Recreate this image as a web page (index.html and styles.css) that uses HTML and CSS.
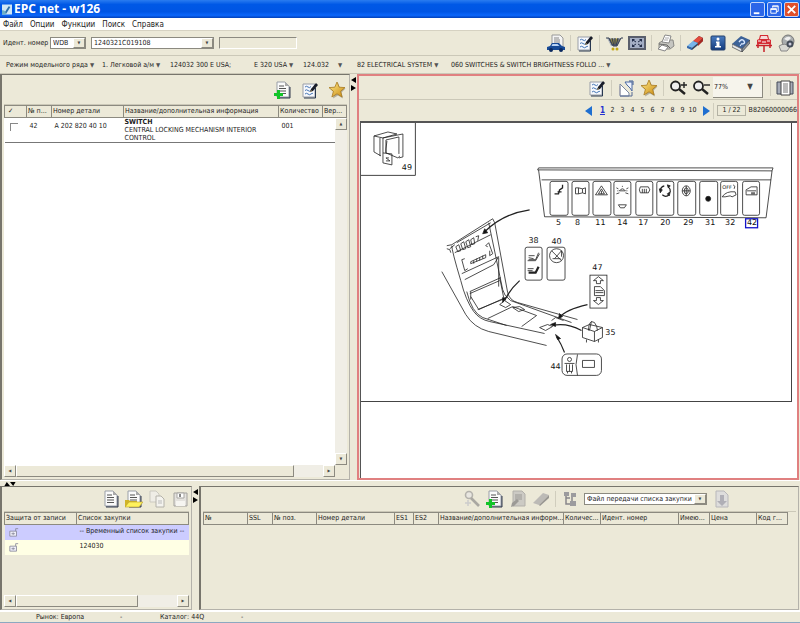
FILE: index.html
```html
<!DOCTYPE html>
<html lang="ru">
<head>
<meta charset="utf-8">
<title>EPC net - w126</title>
<link rel="stylesheet" href="styles.css">
</head>
<body>
<svg class="defs" aria-hidden="true">
  <defs>
    <linearGradient id="gold" x1="0" y1="0" x2="1" y2="1"><stop offset="0" stop-color="#ffe98a"/><stop offset="1" stop-color="#c98a10"/></linearGradient>
    <linearGradient id="navy" x1="0" y1="0" x2="0" y2="1"><stop offset="0" stop-color="#4a7cc0"/><stop offset="1" stop-color="#123a7c"/></linearGradient>
  </defs>
  <symbol id="doc" viewBox="0 0 18 18">
    <path d="M4 2h8l4 4v11H4z" fill="#8a8f9c"/><path d="M3 1h8l4 4v11H3z" fill="#fafafa" stroke="#9a9fa8"/>
    <path d="M11 1l4 4h-4z" fill="#aaa"/><path d="M5 5h5M5 7.500h7M5 10h7M5 12.500h7" stroke="#555" fill="none"/><path d="M16 6v11H4" stroke="#333b4c" fill="none"/>
  </symbol>
  <symbol id="docplus" viewBox="0 0 18 18">
    <use href="#doc"/><path d="M0 12h3V9h3v3h3v3H6v3H3v-3H0z" fill="#12c428"/>
  </symbol>
  <symbol id="note" viewBox="0 0 18 18">
    <path d="M2 3h12v13H2z" fill="#f6f8fc" stroke="#9a9ea8"/><path d="M14.500 7v10H3" stroke="#283850" fill="none"/>
    <path d="M4 6q1.500-1.500 3 0t3-.500M4 9.500q1.500-1.500 3 0t3 0M4 13q1.500-1.500 3 0t3 0 2 0" fill="none" stroke="#4474b4"/>
    <path d="M9 11l1-3 5-6 2 2-5 6z" fill="#181c28"/><path d="M9 11l1-2 1 1z" fill="#c8a860"/>
  </symbol>
  <symbol id="star" viewBox="0 0 18 18">
    <path d="M10 2l2 5 5.500.500-4 4 1.500 6-5-3-5 3 1-6-4-4L8 7z" fill="#8c8672" opacity=".6"/>
    <path d="M9 1l2.200 5.200 5.800.400-4.400 3.700 1.500 5.700L9 12.800 3.900 16l1.500-5.700L1 6.600l5.800-.400z" fill="url(#gold)" stroke="#a87a20" stroke-width=".8"/>
  </symbol>
  <symbol id="cardoc" viewBox="0 0 18 18">
    <path d="M5 1h8l3 3v9H5z" fill="#f4f4f4" stroke="#999"/><path d="M7 4h5M7 6h6M7 8h6" stroke="#888"/>
    <path d="M0 16v-3l3-1 2-3h7l3 3 3 1v3z" fill="#174a96"/><path d="M5.500 10h5l2 2h-8z" fill="#b8d2f4"/>
    <circle cx="4" cy="16" r="2" fill="#0c2a60"/><circle cx="14" cy="16" r="2" fill="#0c2a60"/>
  </symbol>
  <symbol id="cart" viewBox="0 0 18 18">
    <path d="M2 4h14l-4 8H6z" fill="#a4adb8"/><path d="M5 6l2-2 2 2 2-2 3 2-3 4H7z" fill="#ecd048"/>
    <path d="M1 4h3l4 8h4l4-8h2M4 6h11M5 8h9M6 10h7M7 4l2 8M10 4v8M13 4l-2 8" fill="none" stroke="#333c50"/>
    <circle cx="8" cy="15" r="1.500" fill="#c4a818"/><circle cx="12" cy="15" r="1.500" fill="#c4a818"/>
  </symbol>
  <symbol id="full" viewBox="0 0 18 18">
    <path d="M0 2h18v14H0z" fill="#5a5f6c"/><path d="M2 4h14v10H2z" fill="#a4aec4"/>
    <path d="M4 5h3L4 8zM14 5h-3l3 3zM4 13h3l-3-3zM14 13h-3l3-3z" fill="#222c48"/><path d="M5 6l3 2M13 6l-3 2M5 12l3-2M13 12l-3-2" stroke="#222c48"/>
  </symbol>
  <symbol id="printer" viewBox="0 0 18 18">
    <path d="M2 9l5-3h9l1 6-4 3H2z" fill="#c6c6c1" stroke="#8a8a86"/><path d="M5 8l3-7 6 1-2 7z" fill="#fff" stroke="#888"/>
    <path d="M2 10l8 1 3 3" fill="none" stroke="#666"/><path d="M1 15l4-4 6 2-3 4z" fill="#fff" stroke="#888"/><path d="M8 4h4M7 6h4" stroke="#aaa"/>
  </symbol>
  <symbol id="eraser" viewBox="0 0 18 18">
    <path d="M1 13L13 2l4 2v3L6 16z" fill="#36435c"/><path d="M7 7l6-5 4 2-5 5z" fill="#e24a3c"/><path d="M1 12l6-5 5 2-6 5z" fill="#78b4ea"/>
    <path d="M12 9l5-5v3l-5 5z" fill="#a82820"/><path d="M1 12l5 2v2l-5-2z" fill="#3468ac"/>
  </symbol>
  <symbol id="info" viewBox="0 0 18 18">
    <rect x="2" y="2" width="14" height="14" rx="1" fill="url(#navy)" stroke="#24406c"/><circle cx="9" cy="5" r="1.500" fill="#fff"/><path d="M7 7.500h3.500V12H12v1.500H6V12h1.500V9H7z" fill="#fff"/>
  </symbol>
  <symbol id="book" viewBox="0 0 18 18">
    <path d="M0 10l9-8 9 4-8 9z" fill="#3c6298"/><path d="M0 10l10 5v3L0 13z" fill="#e4e8ee" stroke="#555" stroke-width=".8"/><path d="M10 15l8-9v3l-8 9z" fill="#89939f" stroke="#333" stroke-width=".6"/>
    <path d="M7 8q3-4 5-1t-3 3M8 11l1 .500" stroke="#d8e8ff" fill="none" stroke-width="1.400"/>
  </symbol>
  <symbol id="carred" viewBox="0 0 18 18">
    <path d="M2 10V6l2-1 1-4h8l1 4 2 1v4z" fill="#d42c34"/><path d="M6 2h6l1 3H5z" fill="#f6dada"/><path d="M3 7h3M12 7h3M7 8h4" stroke="#fff"/>
    <path d="M1 11.500h16M9 12v6M3 10v4M15 10v4" stroke="#c82028" stroke-width="1.500"/>
  </symbol>
  <symbol id="globe" viewBox="0 0 18 18">
    <circle cx="10" cy="7" r="6" fill="#a9adae" stroke="#777"/><path d="M6 5q4-4 7-1l-3 3z" fill="#eee"/><path d="M1 12q6-4 11 1l-3 4H3z" fill="#d8d8d2" stroke="#888"/>
    <circle cx="12" cy="10" r="3.500" fill="#444c58"/><circle cx="12" cy="10" r="1.500" fill="#ccd"/>
  </symbol>
  <symbol id="expand" viewBox="0 0 18 18">
    <path d="M3 5l9 9v3H3z" fill="#fff" stroke="#7a86a0"/><path d="M8 3h7v9l-2-3-3-3z" fill="#eef2fc" stroke="#4a68a0"/><path d="M3 17h12v-4" fill="none" stroke="#566a94"/>
    <path d="M3 7v9" stroke="#99a"/><path d="M12 2h4v4" stroke="#3c5a94" fill="none"/>
  </symbol>
  <symbol id="zoomin" viewBox="0 0 18 18">
    <circle cx="6.500" cy="7" r="4.500" fill="#eee" stroke="#222" stroke-width="1.800"/><path d="M10 10l6 5" stroke="#222" stroke-width="2.400"/><path d="M15 3v6M12 6h6" stroke="#222" stroke-width="1.400"/>
  </symbol>
  <symbol id="zoomout" viewBox="0 0 18 18">
    <circle cx="6.500" cy="7" r="4.500" fill="#eee" stroke="#222" stroke-width="1.800"/><path d="M10 10l6 5" stroke="#222" stroke-width="2.400"/><path d="M12 6h6" stroke="#222" stroke-width="1.400"/>
  </symbol>
  <symbol id="pages" viewBox="0 0 18 18">
    <path d="M1 3h16v12H1z" fill="#a8adb8" stroke="#444a58"/><path d="M5 2h9v14H5z" fill="#fff" stroke="#444"/><path d="M7 5h5M7 7h5M7 9h5M7 11h5M7 13h5" stroke="#777"/>
  </symbol>
  <symbol id="folder" viewBox="0 0 18 18">
    <use href="#doc"/><path d="M0 17V10h4l1 1h7v6z" fill="#d0b428"/><path d="M0 17l4-5h14l-4 5z" fill="#fff25c" stroke="#b8a030" stroke-width=".6"/>
  </symbol>
  <symbol id="copy" viewBox="0 0 18 18">
    <path d="M2 1h6l3 3v8H2z" fill="#efede6" stroke="#cbc9c0"/><path d="M8 6h5l3 3v8H8z" fill="#f4f3ee" stroke="#b4b2aa"/><path d="M10 11h4M10 13h4" stroke="#bbb"/>
  </symbol>
  <symbol id="floppy" viewBox="0 0 18 18">
    <path d="M3 3h13v13H3z" fill="#e4e2de" stroke="#a4a29e"/><path d="M6 3h7v5H6z" fill="#fff" stroke="#a8a6a2"/><path d="M9 4v3" stroke="#888" stroke-width="2"/><path d="M5 11h9v5H5z" fill="#f6f5f1"/>
  </symbol>
  <symbol id="key" viewBox="0 0 18 18">
    <circle cx="6" cy="5" r="3.500" fill="#e8e6e0" stroke="#b4b2ac" stroke-width="1.600"/><path d="M8 8l8 8" stroke="#aaa8a2" stroke-width="2.600"/><path d="M2 13h6M5 10v6" stroke="#ccc" stroke-width="1.500"/>
  </symbol>
  <symbol id="docedit" viewBox="0 0 18 18">
    <path d="M4 1h9l3 3v12H4z" fill="#cccac4" stroke="#b2b0aa"/><path d="M6 5h7M6 7h7M6 9h7" stroke="#9a9894"/><path d="M2 17l1-4 5-4 2 2-5 5z" fill="#9c9a96"/>
  </symbol>
  <symbol id="erasergrey" viewBox="0 0 18 18">
    <path d="M1 13L11 3l6 2-10 10z" fill="#bcbab6"/><path d="M7 15L17 5v3L8 16z" fill="#989692"/>
  </symbol>
  <symbol id="tree" viewBox="0 0 18 18">
    <path d="M5 3v11h4M5 8h4M11 6v5" stroke="#88868a" stroke-width="1.500" fill="none"/><path d="M3 2h5v4H3zM10 3h5v4h-5zM9 11h6v5H9z" fill="#9c9b9e"/>
  </symbol>
  <symbol id="docdown" viewBox="0 0 18 18">
    <path d="M4 1h8l4 4v12H4z" fill="#dedddc" stroke="#b8b7ba"/><path d="M8 5h4v6h3l-5 5-5-5h3z" fill="#b0afb6"/>
  </symbol>
  <symbol id="lock" viewBox="0 0 12 12">
    <path d="M1 5h8v6H1z" fill="#eeeef8" stroke="#88889a"/><path d="M3 8h4M5 6.500v3" stroke="#88889a"/><path d="M8 5V2h3" fill="none" stroke="#88889a"/>
  </symbol>
</svg>

<header class="titlebar">
  <svg class="app-icon" viewBox="0 0 12 12"><path d="M0 0h12v12H0z" fill="#cfe6f4"/><path d="M3 10l5-8 2 1-5 8z" fill="#2b6ea8"/><path d="M0 7q4-1 5 5H0z" fill="#6cb0c8"/></svg>
  <h1>EPC net - w126</h1>
  <div class="winbtns">
    <button aria-label="Свернуть"><svg viewBox="0 0 14 14"><path d="M3 10h6v2H3z" fill="#fff"/></svg></button>
    <button aria-label="Восстановить"><svg viewBox="0 0 14 14"><path d="M5 5V3h6v6H9M5 4h6M3 6h6v5H3zM3 7h6" stroke="#fff" fill="none"/></svg></button>
    <button class="close" aria-label="Закрыть"><svg viewBox="0 0 14 14"><path d="M3 3l8 8M11 3l-8 8" stroke="#fff" stroke-width="2"/></svg></button>
  </div>
</header>

<nav class="menu"><button>Файл</button><button>Опции</button><button>Функции</button><button>Поиск</button><button>Справка</button></nav>

<div class="toolbar ident">
  <label for="wmi">Идент. номер</label>
  <span class="combo wmi"><select id="wmi"><option>WDB</option></select></span>
  <span class="combo vin"><select aria-label="Номер"><option>1240321C019108</option></select></span>
  <input class="extra" aria-label="Дополнение" disabled>
  <div class="icons">
    <button aria-label="Карта автомобиля"><svg><use href="#cardoc"/></svg></button><i></i>
    <button aria-label="Заметки"><svg><use href="#note"/></svg></button><i></i>
    <button aria-label="Корзина"><svg><use href="#cart"/></svg></button>
    <button aria-label="Полный экран"><svg><use href="#full"/></svg></button><i></i>
    <button aria-label="Печать"><svg><use href="#printer"/></svg></button><i></i>
    <button aria-label="Очистить"><svg><use href="#eraser"/></svg></button>
    <button aria-label="Информация"><svg><use href="#info"/></svg></button>
    <button aria-label="Справочник"><svg><use href="#book"/></svg></button>
    <button aria-label="Автомобиль"><svg><use href="#carred"/></svg></button>
    <button aria-label="Сеть"><svg><use href="#globe"/></svg></button>
  </div>
</div>

<nav class="crumbs">
  <button class="drop">Режим модельного ряда</button>
  <button class="drop">1. Легковой а/м</button>
  <span>124032 300 E USA;</span>
  <button class="drop">E 320 USA</button>
  <button class="drop spread">124.032</button>
  <button class="drop">82 ELECTRICAL SYSTEM</button>
  <button class="drop">060 SWITCHES &amp; SWITCH BRIGHTNESS FOLLO ...</button>
</nav>

<main class="upper">
  <section class="pane parts">
    <div class="toolbar wide">
      <div class="icons">
        <button aria-label="Добавить"><svg><use href="#docplus"/></svg></button>
        <button aria-label="Заметки"><svg><use href="#note"/></svg></button>
        <button aria-label="Избранное"><svg><use href="#star"/></svg></button>
      </div>
    </div>
    <div class="listing">
      <table>
        <colgroup><col class="w22"><col class="w25"><col class="w72"><col><col class="w44"><col class="w24"></colgroup>
        <thead><tr><th class="tick">✓</th><th>№ п...</th><th>Номер детали</th><th>Название/дополнительная информация</th><th>Количество</th><th>Вер...</th></tr></thead>
        <tbody><tr><td><input type="checkbox" aria-label="Выбрать 42"></td><td>42</td><td>A 202 820 40 10</td><td class="name"><b>SWITCH</b><br>CENTRAL LOCKING MECHANISM INTERIOR CONTROL</td><td>001</td><td></td></tr></tbody>
      </table>
      <div class="vscroll"><button class="up" aria-label="Вверх"></button><button class="down" aria-label="Вниз"></button></div>
    </div>
    <div class="hscroll"><button class="left" aria-label="Влево"></button><span class="thumb"></span><button class="right" aria-label="Вправо"></button></div>
  </section>
  <div class="vsplit"><svg viewBox="0 0 5 14"><path d="M5 0v6L0 3zM0 8v6l5-3z"/></svg></div>
  <section class="viewer">
    <div class="toolbar view">
      <div class="icons">
        <button aria-label="Заметки"><svg><use href="#note"/></svg></button><i></i>
        <button aria-label="Вписать"><svg><use href="#expand"/></svg></button>
        <button aria-label="Избранное"><svg><use href="#star"/></svg></button><i></i>
        <button aria-label="Увеличить"><svg><use href="#zoomin"/></svg></button>
        <button aria-label="Уменьшить"><svg><use href="#zoomout"/></svg></button>
        <span class="scale"><select aria-label="Масштаб"><option>77%</option></select></span><i></i>
        <button aria-label="Страницы"><svg><use href="#pages"/></svg></button>
      </div>
    </div>
    <nav class="pager">
      <button aria-label="Назад"><svg viewBox="0 0 8 10"><path d="M7 0v10L0 5z" fill="#1f6fd0"/></svg></button>
      <div class="nums"><a href="#" class="on">1</a><a href="#">2</a><a href="#">3</a><a href="#">4</a><a href="#">5</a><a href="#">6</a><a href="#">7</a><a href="#">8</a><a href="#">9</a><a href="#">10</a></div>
      <button aria-label="Вперёд"><svg viewBox="0 0 8 10"><path d="M1 0v10l7-5z" fill="#1f6fd0"/></svg></button>
      <i></i><span class="count">1 / 22</span><span class="code">B82060000066</span>
    </nav>
    <div class="sheet">
      <svg class="drawing" viewBox="361 124 431 279" role="img" aria-label="Схема выключателей">
        <g fill="none" stroke="#222" stroke-width=".8">
          <path d="M415.500 124v52.500H361" stroke="#444" stroke-width="1"/>
          <path d="M374 137l14-4 9 2-14 4zM374 137v16l7 4M383 139v25l9 2v-11M383 139l20-4v23l-4 1M386 141v13l12 5 2-2M386 141l13-3v17M386 154v-4l1-8M383 154l9 1M389 159h-3l4 3h-4M380 139v18"/>
          <path d="M539 169h235l-1 3-235-1zM539 171l6 47 222 1 6-47M542 181h230"/>
          <rect x="550.500" y="182.500" width="18" height="34" rx="2"/><rect x="572.500" y="182.500" width="17" height="34" rx="2"/><rect x="593.500" y="182.500" width="18" height="34" rx="2"/><rect x="614.500" y="182.500" width="17" height="34" rx="2"/><rect x="636.500" y="182.500" width="17" height="34" rx="2"/><rect x="657.500" y="182.500" width="17" height="34" rx="2"/><rect x="678.500" y="182.500" width="18" height="34" rx="2"/><rect x="700.500" y="182.500" width="18" height="34" rx="2"/><rect x="721.500" y="182.500" width="17" height="34" rx="2"/><rect x="743.500" y="182.500" width="17" height="34" rx="2"/>
          <path d="M555 195h4l1-4 3-2v-3M558 193h4" stroke-width="1.300"/>
          <path d="M576 189h3l4 1 3-1v6l-3-1-4 1h-3zM579 189v6M583 190v4"/>
          <path d="M602 187l6 9h-12zM602 190l3 5h-6zM602 192v3"/>
          <path d="M620 192q3-4 6 0zM617 189l2 1M629 189l-2 1M623 188v-1M617 195l3-1M629 195l-3-1M618 192h1M627 192h1M619 206h8l-2 3h-4z"/>
          <path d="M641 188h8q3 3 0 6h-8q-2-3 0-6zM643 190v4M645 190v4M647 190v4"/>
          <path d="M661 191a5.500 5.500 0 0 1 4-4M669 188a5.500 5.500 0 0 1 2 5M670 196a5.500 5.500 0 0 1-7 0" stroke-width="1.200"/><path d="M660 190l3 1-2 3zM668 186l3 1-2 2zM671 193l-1 4-2-2z" fill="#222"/>
          <ellipse cx="687" cy="192" rx="4" ry="5"/><ellipse cx="687" cy="192" rx="2" ry="3"/><path d="M683 192h8M687 187v10"/>
          <circle cx="709" cy="200" r="2.500" fill="#111"/>
          <path d="M723 198q4-6 13-5l1 3-4 2-2-1-5 1zM734 186q3 1 1 4"/>
          <path d="M747 195v-4l5-3h6v8h-11zM748 192h9M752 194h4M752 195h4"/>
          <path d="M530 211q-27 4-45 22" stroke-width="1.200"/><path d="M483 235l2-5 3 4z" fill="#111"/>
          <path d="M447 247l5-1 41-26M452 247q0 5 9 35 5 20 13 31 6 8 16 10l55 12M493 220l2 4 13 70q2 8 10 10l60 17M489 224l14 67q1 6 8 11l61 22M450 250l5-4M455 254l36-18M457 244l34-20M447 250q4 0 4 4"/>
          <path d="M456 248l3-2 2 6-3 1zM461 245l3-2 2 7-3 1zM466 243l3-2 2 7-3 1zM471 241l3-2 1 6-3 1zM476 238l3-1-1 5"/>
          <path d="M468 270l-3 2-3-11 3-1M488 248l-2-1 3-3 4 11-3 2v-5M471 263l15-7v3l-15 6zM474 262v3M477 260v3M480 259v3M483 257v3"/>
          <path d="M462 275l37-17M465 281l29-15 5-8M470 293l31-14M470 295l30-13M471 298l8 13 29-13M499 259v29M478 311l27-11M471 293v8M500 279l4 20"/>
          <path d="M488 320l25-12 24 9-15 11M500 306l5-4 6 4-5 3zM513 309l7-1 5 3-6 2zM540 329l8-3 5 2-7 4zM552 322l4-3 8 3"/>
          <path d="M442 273l24 43q8 13 23 17l58 14M467 293q5 21 16 26l24 8"/>
          <path d="M520 282q-10 9-15 20M588 306q-22 5-28 13M582 332q-15-8-29-5M565 354q-3-8-8-16" stroke-width="1.200"/><path d="M503 304v-5l3 1zM559 320l1-5 3 3zM551 326l5-2v4zM556 336l5 4-3 1z" fill="#111"/>
          <rect x="525.500" y="248.500" width="17" height="33" rx="2"/><rect x="547.500" y="248.500" width="18" height="33" rx="2"/>
          <path d="M529 261h7l3-7M529 257h6M529 259l5 1M528 262h8l4-7"/><path d="M529 274h7l3-6" stroke-width="2.200"/><path d="M528 270h6M528 272h5"/>
          <circle cx="557" cy="257" r="7"/><path d="M552 252l10 10M562 252l-7 8M553 260h8M562 252v6"/>
          <rect x="590.500" y="276.500" width="17" height="33"/><path d="M599 278l5 4h-3v3h-4v-3h-3zM599 306l5-4h-3v-3h-4v3h-3zM595 288h6l4 4v5h-10zM596 292h8M596 294h8"/>
          <path d="M583 329l7-3 13 3v10l-8 4-12-4zM583 329l12 4 8-4M595 333v10M589 332q0-7 3-9l3 1q3 4 3 8M592 323l-2 9M587 341v3M599 341v3"/>
          <rect x="562.500" y="355.500" width="39.500" height="21.500" rx="5"/><path d="M578 356q-3 10 0 21M583 362h12v7h-12z"/><circle cx="570" cy="361" r="2"/><path d="M565 365h10M567 366v7h6v-7M568 373v2M572 373v2M570 366v7"/>
          <rect x="746.500" y="220" width="12" height="9" stroke="#1414c8" stroke-width="1.300"/>
        </g>
        <g class="marks">
          <text x="559" y="226">5</text><text x="578" y="226">8</text><text x="601" y="226">11</text><text x="623" y="226">14</text><text x="644" y="226">17</text><text x="666" y="226">20</text><text x="689" y="226">29</text><text x="711" y="226">31</text><text x="731" y="226">32</text><text x="753" y="226">42</text>
          <text x="407" y="171">49</text><text x="534" y="244">38</text><text x="557" y="245">40</text><text x="598" y="271">47</text><text x="611" y="337">35</text><text x="556" y="371">44</text><text x="728" y="190" class="tiny">OFF</text>
        </g>
      </svg>
    </div>
  </section>
</main>

<div class="hsplit"><svg viewBox="0 0 14 5"><path d="M0 5h7L3 0zM7 0h7l-3 5z"/></svg></div>

<div class="lower">
  <section class="pane lists">
    <div class="toolbar low">
      <div class="icons">
        <button aria-label="Новый список"><svg><use href="#doc"/></svg></button>
        <button aria-label="Открыть"><svg><use href="#folder"/></svg></button>
        <button aria-label="Копировать" disabled><svg><use href="#copy"/></svg></button>
        <button aria-label="Сохранить" disabled><svg><use href="#floppy"/></svg></button>
      </div>
    </div>
    <table>
      <colgroup><col class="w72"><col></colgroup>
      <thead><tr><th>Защита от записи</th><th>Список закупки</th></tr></thead>
      <tbody><tr class="sel"><td><svg class="lock"><use href="#lock"/></svg></td><td>-- Временный список закупки --</td></tr>
      <tr class="alt"><td><svg class="lock"><use href="#lock"/></svg></td><td>124030</td></tr></tbody>
    </table>
    <div class="hscroll short"><button class="left" aria-label="Влево"></button><span class="thumb"></span><button class="right" aria-label="Вправо"></button></div>
  </section>
  <div class="vsplit"><svg viewBox="0 0 5 14"><path d="M5 0v6L0 3zM0 8v6l5-3z"/></svg></div>
  <section class="pane items">
    <div class="toolbar low">
      <div class="icons">
        <button aria-label="Поиск" disabled><svg><use href="#key"/></svg></button>
        <button aria-label="Добавить"><svg><use href="#docplus"/></svg></button>
        <button aria-label="Изменить" disabled><svg><use href="#docedit"/></svg></button>
        <button aria-label="Удалить" disabled><svg><use href="#erasergrey"/></svg></button><i></i>
        <button aria-label="Дерево" disabled><svg><use href="#tree"/></svg></button>
        <span class="combo file"><select aria-label="Передача"><option>Файл передачи списка закупки</option></select></span>
        <button aria-label="Передать" disabled><svg><use href="#docdown"/></svg></button>
      </div>
    </div>
    <table>
      <colgroup><col class="w44"><col class="w25"><col class="w44"><col class="w78"><col class="w19"><col class="w25"><col><col class="w37"><col class="w78"><col class="w31"><col class="w47"><col class="w31"></colgroup>
      <thead><tr><th>№</th><th>SSL</th><th>№ поз.</th><th>Номер детали</th><th>ES1</th><th>ES2</th><th>Название/дополнительная информ...</th><th>Количес...</th><th>Идент. номер</th><th>Имею...</th><th>Цена</th><th>Код г...</th></tr></thead>
    </table>
  </section>
</div>

<footer class="status"><span>Рынок: Европа</span><span>-</span><span>Каталог: 44Q</span><span>-</span></footer>
</body>
</html>
```
FILE: styles.css
```css
* { box-sizing: border-box; }
html, body { height: 100%; }
body {
  margin: 0;
  display: flex;
  flex-direction: column;
  overflow: hidden;
  background: #ece9d8;
  color: #1c1c1c;
  font: 7px/9px "DejaVu Sans Condensed", "Noto Sans", sans-serif;
}
button, select, input { font: inherit; color: inherit; margin: 0; padding: 0; border: 0; background: none; border-radius: 0; }
button { white-space: nowrap; }
select { appearance: none; width: 100%; height: 100%; padding-left: 2px; }
a { color: inherit; text-decoration: none; }
.defs { position: absolute; width: 0; height: 0; }

/* window frame */
.titlebar {
  display: flex; align-items: center; flex: none; height: 18px; padding: 0 1px 0 2px; gap: 2px;
  background: linear-gradient(#2a7cf0, #0058e6 25%, #0055e4 65%, #0b66fa 85%, #0340b8);
}
.titlebar h1 { margin: 0; font: bold 12px/16px "Open Sans", sans-serif; color: #fff; }
.app-icon { width: 10px; height: 11px; }
.winbtns { display: flex; gap: 2px; margin-left: auto; }
.winbtns button { width: 15px; height: 15px; border: 1px solid #c4d6fa; border-radius: 2px; background: #2c66e8; }
.winbtns .close { background: #e0502c; }
.winbtns svg { display: block; width: 100%; height: 100%; }

.menu { display: flex; flex: none; gap: 7px; height: 13px; padding: 0 3px; background: #fff; font-size: 8px; border-bottom: 1px solid #d6d2c2; }

/* toolbars */
.toolbar { display: flex; align-items: center; flex: none; border-bottom: 1px solid #cbc8b8; }
.ident { height: 25px; padding: 0 4px 0 3px; gap: 5px; }
.ident label { width: 42px; white-space: nowrap; }
.icons { display: flex; align-items: center; gap: 5px; margin-left: auto; }
.icons button, .icons button svg { display: block; width: 18px; height: 18px; }
.icons i, .pager i { width: 1px; height: 16px; background: #d0cdbd; }
.combo { display: flex; height: 12px; background: #fff; border: 1px solid #8c8a80; }
.combo::after, .scale::after {
  content: "▼"; flex: none; width: 10px; background: #ece9d8; border: 1px solid; border-color: #fff #8c8a80 #8c8a80 #fff;
  font-size: 4px; line-height: 8px; text-align: center; color: #444;
}
.wmi { width: 36px; }
.vin { width: 123px; }
.file { width: 123px; }
.extra { width: 78px; height: 12px; border: 1px solid; border-color: #8c8a80 #fff #fff #8c8a80; }

.crumbs {
  display: grid; grid-template-columns: 96px 68px 84px 49px 54px 94px auto; justify-content: start; align-content: center; align-items: baseline;
  flex: none; height: 18px; padding-left: 6px; border-bottom: 1px solid #cbc8b8; text-align: left;
}
.crumbs button { text-align: left; }
.drop::after { content: "▼"; margin-left: 2px; font-size: 6px; color: #555; }
.spread::after { margin-left: 9px; }

/* panes */
.upper { display: flex; flex: 406 1 0; min-height: 0; }
.lower { display: flex; flex: 124 1 0; min-height: 0; }
.pane { display: flex; flex-direction: column; min-width: 0; padding: 0 2px; border: 1px solid; border-color: #77756c #b4b2aa #b4b2aa #77756c; border-left-width: 2px; }
.parts { flex: 343 1 0; }
.viewer { display: flex; flex-direction: column; flex: 438 1 0; min-width: 0; border: 2px solid #e08080; margin-right: 1px; }
.lists { flex: 185 1 0; }
.items { flex: 593 1 0; margin-right: 1px; }
.vsplit { flex: none; width: 7px; padding: 3px 1px; }
.vsplit svg { display: block; width: 5px; height: 14px; }
.hsplit { flex: none; height: 6px; padding: 1px 3px; border-top: 1px solid #fff; }
.hsplit svg { display: block; width: 14px; height: 4px; }
.wide { height: 30px; padding-right: 1px; }
.wide .icons { gap: 9px; }
.low { height: 25px; }
.items .low { padding-right: 66px; }

/* tables */
table { border-collapse: collapse; table-layout: fixed; width: 100%; }
th { height: 12px; padding: 0 1px; overflow: hidden; font-weight: normal; text-align: left; white-space: nowrap; border: 1px solid #8c8a80; background: #ece9d8; line-height: 9px; }
td { padding: 0 3px; vertical-align: top; }
.w19 { width: 19px; } .w22 { width: 22px; } .w24 { width: 24px; } .w25 { width: 25px; } .w31 { width: 31px; }
.w37 { width: 37px; } .w44 { width: 44px; } .w47 { width: 47px; } .w72 { width: 72px; } .w78 { width: 78px; }
.listing { position: relative; flex: 1; min-height: 0; background: #fff; }
.listing tbody tr { border-bottom: 1px solid #777; }
.listing td { padding: 4px 3px 0; white-space: nowrap; }
.listing .name { padding: 0 1px; white-space: normal; line-height: 8px; }
.tick { padding-left: 3px; }
.listing input { display: block; appearance: none; width: 8px; height: 8px; margin: 1px 2px; border: solid #888; border-width: 1px 0 0 1px; }
.vscroll { position: absolute; top: 13px; right: 0; bottom: 0; width: 12px; display: flex; flex-direction: column; justify-content: space-between; background: #f0eee6; }
.vscroll button, .hscroll button, .thumb { flex: none; border: 1px solid; border-color: #fff #8c8a80 #8c8a80 #fff; background: #ece9d8; }
.vscroll button, .hscroll button { width: 12px; height: 12px; font-size: 4px; line-height: 8px; color: #444; }
.up::before { content: "▲"; } .down::before { content: "▼"; } .left::before { content: "◀"; } .right::before { content: "▶"; }
.hscroll { display: flex; flex: none; height: 12px; margin-right: 12px; background: #f0eee6; }
.hscroll .thumb { flex: 0 1 84%; }
.hscroll .right { margin-left: auto; }
.short { margin: auto 0 0; }
.short .thumb { flex-basis: 66%; }
.parts, .lists { padding-bottom: 2px; }
.lists td { height: 15px; padding: 2px 3px; }
.sel { background: #ccccff; }
.alt { background: #ffffe4; }
.lock { display: block; width: 12px; height: 10px; }
.items table { width: calc(100% - 8px); }

/* drawing viewer */
.view { height: 24px; padding-right: 3px; }
.scale { display: flex; width: 50px; height: 21px; margin: 0 2px 0 -2px; background: #f6f4ec; border-right: 1px solid #8c8a80; border-bottom: 1px solid #8c8a80; }
.scale select { padding-left: 1px; }
.scale::after { width: 24px; border: 0; font-size: 8px; line-height: 20px; background: none; }
.pager { display: flex; align-items: center; justify-content: flex-end; flex: none; height: 21px; gap: 3px; }
.pager svg { display: block; width: 8px; height: 10px; }
.nums { display: grid; grid-template-columns: repeat(10, 10px); margin: 0 2px 0 1px; text-align: center; }
.on { color: #2430d0; font-weight: bold; text-decoration: underline; font-size: 8px; }
.count { padding: 0 4px; border: 1px solid #b4b2a4; }
.sheet { flex: 1; min-height: 0; margin-left: 1px; background: #fff; border: solid #555; border-width: 2px 0 0 1px; }
.drawing { display: block; width: calc(100% - 5px); border-right: 1px solid #444; border-bottom: 1px solid #444; }
.marks { font: 8px "DejaVu Sans", sans-serif; text-anchor: middle; fill: #111; }
.tiny { font-size: 5px; }

.status { display: grid; grid-template-columns: 84px 40px 81px auto; justify-content: start; align-items: center; flex: none; height: 13px; padding-left: 36px; border-top: 2px solid #fff; border-bottom: 1px solid #8ca8c0; }
```
